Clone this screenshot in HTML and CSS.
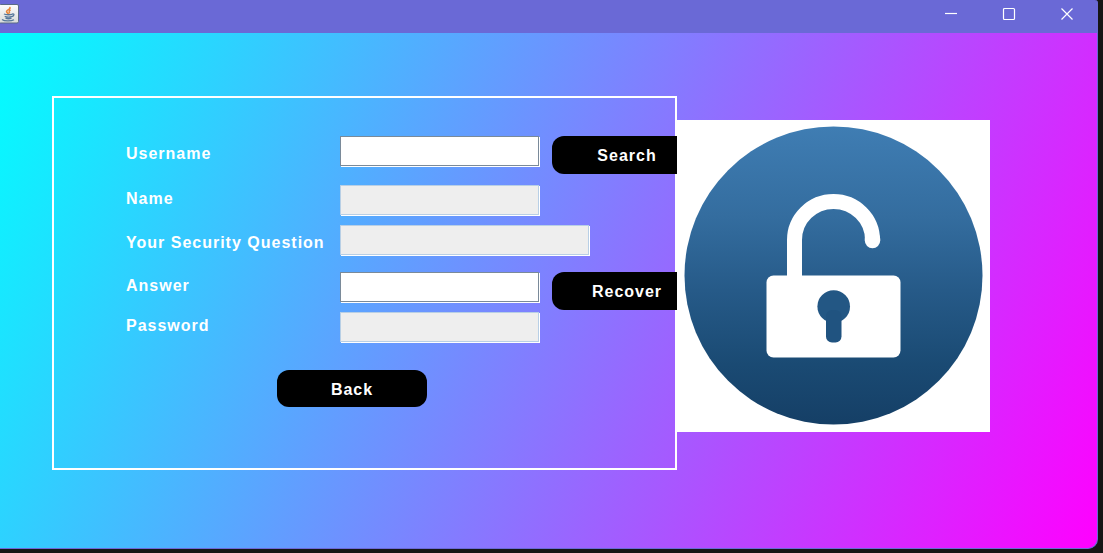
FILE: index.html
```html
<!DOCTYPE html>
<html lang="en">
<head>
<meta charset="utf-8">
<meta name="viewport" content="width=device-width, initial-scale=1">
<title>Forgot Password</title>
<link rel="stylesheet" href="styles.css">
</head>
<body>
<div class="window">
  <header class="titlebar">
    <svg class="app-icon" width="20" height="20" viewBox="0 0 20 20" aria-hidden="true">
      <defs>
        <linearGradient id="tile" x1="0" y1="0" x2="0" y2="1"><stop offset="0" stop-color="#fdfdfd"/><stop offset="1" stop-color="#d9dcda"/></linearGradient>
      </defs>
      <rect x="-1" y="0.5" width="19.5" height="18.5" rx="1.5" fill="url(#tile)" stroke="#5a6b86"/>
      <path d="M9.500 3C12 5 5.500 6 6.700 8c.5.9 1.300 1.300 1.600 2M10.500 6c-2 1.200-1.600 1.800-.8 3.500" fill="none" stroke="#e8873c" stroke-width="1.600"/>
      <path d="M4 10c2 1 6.500.9 8.500.1M4.700 12.300c2 .8 5.500.8 7.300 0M5.500 14.200c2 .7 4 .7 6 0M12.300 10c2.400-.6 2 2-.5 2.500M2 15.500c2.500 2 9.500 1.700 12 .2" fill="none" stroke="#56779a" stroke-width="1.300"/>
    </svg>
    <div class="window-controls">
      <button class="control" type="button" aria-label="Minimize"><svg width="14" height="14" viewBox="0 0 14 14"><path d="M1 6.500h12"/></svg></button>
      <button class="control" type="button" aria-label="Maximize"><svg width="14" height="14" viewBox="0 0 14 14"><rect x="1.500" y="1.500" width="11" height="11" rx="1"/></svg></button>
      <button class="control" type="button" aria-label="Close"><svg width="14" height="14" viewBox="0 0 14 14"><path d="M1.500 1.500l11 11M12.500 1.500l-11 11"/></svg></button>
    </div>
  </header>
  <main class="stage">
    <form class="panel">
      <div class="fields">
        <label class="label label-low" for="username">Username</label>
        <input class="field" id="username" type="text">
        <button class="button" type="button">Search</button>

        <label class="label" for="name">Name</label>
        <input class="field" id="name" type="text" disabled>

        <label class="label label-low" for="question">Your Security Question</label>
        <input class="field field-wide" id="question" type="text" disabled>

        <label class="label" for="answer">Answer</label>
        <input class="field" id="answer" type="text">
        <button class="button" type="button">Recover</button>

        <label class="label" for="password">Password</label>
        <input class="field" id="password" type="text" disabled>
      </div>
      <div class="actions">
        <button class="button" type="button">Back</button>
      </div>
    </form>
    <svg class="picture" viewBox="0 0 313 312" role="img" aria-label="Open padlock">
      <defs>
        <linearGradient id="disc" x1="0" y1="0" x2="0" y2="1">
          <stop offset="0" stop-color="#3f7db3"/>
          <stop offset="0.300" stop-color="#346d9f"/>
          <stop offset="0.550" stop-color="#265a88"/>
          <stop offset="0.800" stop-color="#1a4a73"/>
          <stop offset="1" stop-color="#153f66"/>
        </linearGradient>
      </defs>
      <rect width="313" height="312" fill="#fff"/>
      <circle cx="156.500" cy="155.500" r="149" fill="url(#disc)"/>
      <path d="M117.500 160V120a39 38.500 0 0 1 78 0" fill="none" stroke="#fff" stroke-width="15"/>
      <path d="M195.500 119v1.500" stroke="#fff" stroke-width="15.500" stroke-linecap="round"/>
      <rect x="89.500" y="155.500" width="134" height="82" rx="7" fill="#fff"/>
      <circle cx="156.700" cy="186.500" r="16.300" fill="#235784"/>
      <rect x="149" y="190" width="15.500" height="32.500" rx="6" fill="#205380"/>
    </svg>
  </main>
</div>
</body>
</html>
```
FILE: styles.css
```css
* {
  box-sizing: border-box;
}

body {
  display: flex;
  min-height: 100vh;
  margin: 0;
  padding: 0 5px 4px 0;
  background: #151515;
  font-family: "Liberation Sans", Arial, sans-serif;
}

.window {
  display: flex;
  flex: 1;
  flex-direction: column;
  overflow: hidden;
  border: solid #6a69d6;
  border-width: 0 1px 1px 0;
  border-radius: 0 3px 10px 0;
  background: #6a69d6;
}

.titlebar {
  display: flex;
  align-items: flex-start;
  justify-content: space-between;
  height: 33px;
}

.app-icon {
  margin-top: 4px;
}

.window-controls {
  display: flex;
  padding-right: 1px;
}

.control {
  display: grid;
  place-items: center;
  width: 58px;
  height: 28px;
  padding: 0;
  border: 0;
  background: none;
}

.control svg {
  fill: none;
  stroke: #fff;
  stroke-width: 1.2;
}

.stage {
  display: flex;
  flex: 1;
  align-items: flex-start;
  padding: 63px 0 63px 52px;
  background: linear-gradient(115deg, #0ff, #f0f);
}

.panel {
  flex: 0 1 625px;
  overflow: hidden;
  padding: 40px 0 63px 74px;
  box-shadow: inset 0 0 0 2px #fff;
}

.fields {
  display: grid;
  grid-template-columns: 214px 212px 150px;
  grid-template-rows: 49px 40px 47px 40px 58px;
  align-items: start;
}

.label {
  grid-column: 1;
  padding-top: 4px;
  color: #fff;
  font-size: 16px;
  font-weight: 700;
  letter-spacing: 1px;
  line-height: 20px;
}

.label-low {
  padding-top: 8px;
}

.field {
  width: 199px;
  height: 30px;
  padding: 0 4px;
  border: 1px solid #7a8a99;
  border-radius: 0;
  background: #fff;
  box-shadow: 1px 1px 0 #fff;
  font: 16px "Liberation Sans", Arial, sans-serif;
}

.field:disabled {
  border-color: #b8cfe5;
  background: #eee;
}

.field-wide {
  grid-column: 2 / 4;
  width: 249px;
}

.button {
  width: 150px;
  height: 38px;
  padding: 2px 0 0;
  border: 0;
  border-radius: 12px;
  background: #000;
  color: #fff;
  font: 700 16px "Liberation Sans", Arial, sans-serif;
  letter-spacing: 1px;
}

.actions {
  padding-left: 151px;
}

.actions .button {
  display: block;
  height: 37px;
}

.picture {
  flex: 0 1 313px;
  min-width: 0;
  margin-top: 24px;
}
```
